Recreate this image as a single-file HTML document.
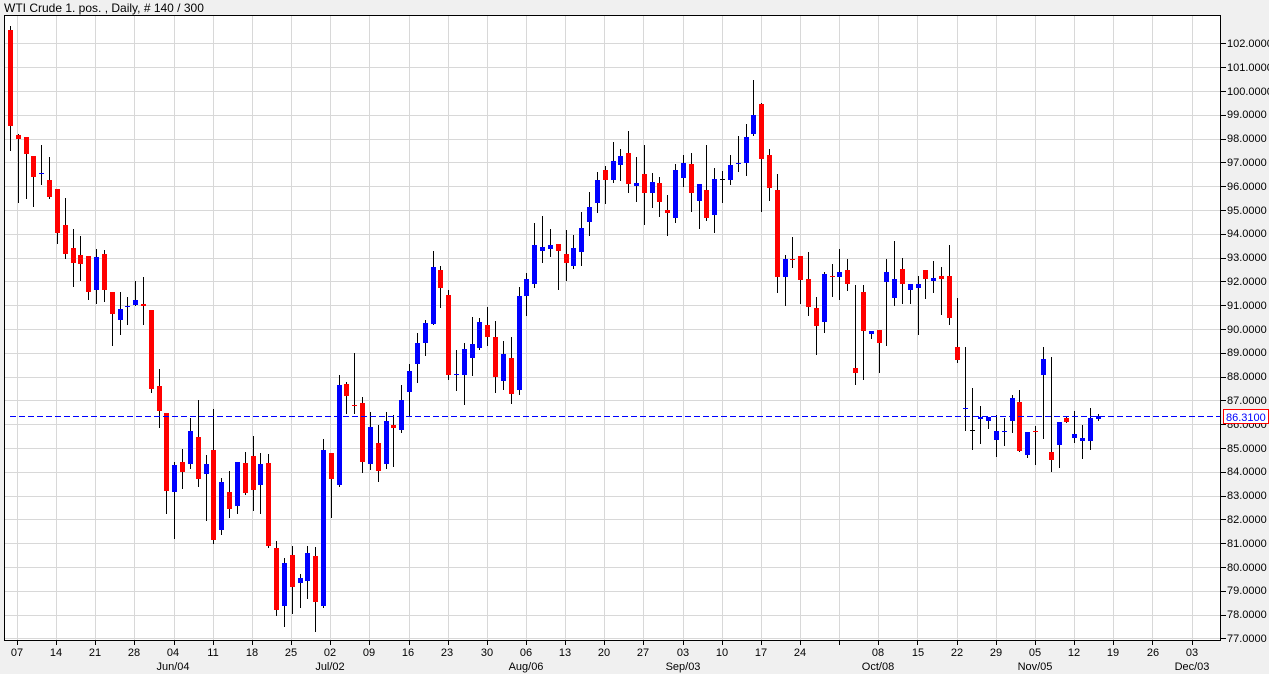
<!DOCTYPE html>
<html><head><meta charset="utf-8">
<style>
html,body{margin:0;padding:0;background:#f0f0f0;}
body{width:1269px;height:674px;overflow:hidden;position:relative;font-family:"Liberation Sans",sans-serif;}
svg{position:absolute;left:0;top:0;}
text{font-family:"Liberation Sans",sans-serif;font-size:11px;fill:#000;}
</style></head><body>
<svg id="s" width="1269" height="674" viewBox="0 0 1269 674" xmlns="http://www.w3.org/2000/svg">
<rect x="0" y="0" width="1269" height="674" fill="#f0f0f0"/>
<rect x="4" y="15" width="1216" height="625" fill="#ffffff"/>
<g id="grid"></g>
<g id="candles"></g>
<line x1="10" y1="416.5" x2="1220" y2="416.5" stroke="#0000ff" stroke-width="1" stroke-dasharray="6,3"/>
<line x1="4.5" y1="15" x2="4.5" y2="640" stroke="#000"/>
<line x1="4" y1="15.5" x2="1220" y2="15.5" stroke="#000"/>
<line x1="1220.5" y1="15" x2="1220.5" y2="641" stroke="#000"/>
<line x1="4" y1="640.5" x2="1221" y2="640.5" stroke="#000"/>
<g id="ticks"></g>
<text x="4" y="12" style="font-size:12px">WTI Crude 1. pos. , Daily, # 140 / 300</text>
<g text-anchor="start">
<text x="1227" y="47">102.0000</text>
<text x="1227" y="71">101.0000</text>
<text x="1227" y="95">100.0000</text>
<text x="1227" y="118">99.0000</text>
<text x="1227" y="142">98.0000</text>
<text x="1227" y="166">97.0000</text>
<text x="1227" y="190">96.0000</text>
<text x="1227" y="214">95.0000</text>
<text x="1227" y="237">94.0000</text>
<text x="1227" y="261">93.0000</text>
<text x="1227" y="285">92.0000</text>
<text x="1227" y="309">91.0000</text>
<text x="1227" y="333">90.0000</text>
<text x="1227" y="356">89.0000</text>
<text x="1227" y="380">88.0000</text>
<text x="1227" y="404">87.0000</text>
<text x="1227" y="428">86.0000</text>
<text x="1227" y="452">85.0000</text>
<text x="1227" y="475">84.0000</text>
<text x="1227" y="499">83.0000</text>
<text x="1227" y="523">82.0000</text>
<text x="1227" y="547">81.0000</text>
<text x="1227" y="571">80.0000</text>
<text x="1227" y="594">79.0000</text>
<text x="1227" y="618">78.0000</text>
<text x="1227" y="642">77.0000</text>
</g>
<rect x="1223.5" y="409.5" width="45" height="14" fill="#fff" stroke="#ff0000"/>
<text x="1226" y="421" style="fill:#0000ff">86.3100</text>
<g text-anchor="middle">
<text x="17" y="656">07</text><text x="56" y="656">14</text><text x="95" y="656">21</text><text x="134" y="656">28</text>
<text x="173" y="656">04</text><text x="213" y="656">11</text><text x="252" y="656">18</text><text x="291" y="656">25</text>
<text x="330" y="656">02</text><text x="369" y="656">09</text><text x="408" y="656">16</text><text x="447" y="656">23</text>
<text x="487" y="656">30</text><text x="526" y="656">06</text><text x="565" y="656">13</text><text x="604" y="656">20</text>
<text x="643" y="656">27</text><text x="683" y="656">03</text><text x="722" y="656">10</text><text x="761" y="656">17</text>
<text x="800" y="656">24</text><text x="878" y="656">08</text><text x="918" y="656">15</text>
<text x="957" y="656">22</text><text x="996" y="656">29</text><text x="1035" y="656">05</text><text x="1074" y="656">12</text>
<text x="1113" y="656">19</text><text x="1153" y="656">26</text><text x="1192" y="656">03</text>
<text x="173" y="670">Jun/04</text><text x="330" y="670">Jul/02</text><text x="526" y="670">Aug/06</text>
<text x="683" y="670">Sep/03</text><text x="878" y="670">Oct/08</text><text x="1035" y="670">Nov/05</text>
<text x="1192" y="670">Dec/03</text>
</g>
</svg>
<script>
(function(){
var NS="http://www.w3.org/2000/svg";
function el(n,a,p){var e=document.createElementNS(NS,n);for(var k in a)e.setAttribute(k,a[k]);p.appendChild(e);return e;}
var g=document.getElementById('grid'),t=document.getElementById('ticks'),c=document.getElementById('candles');
for(var k=0;k<31;k++){var x=Math.round(17+39.15*k)+0.5;
 el('line',{x1:x,y1:16,x2:x,y2:640,stroke:'#d8d8d8'},g);
 el('line',{x1:x,y1:641,x2:x,y2:645,stroke:'#000'},t);}
for(var j=0;j<26;j++){var y=Math.round(43.3+23.8*j)+0.5;
 if(y<640)el('line',{x1:5,y1:y,x2:1220,y2:y,stroke:'#d8d8d8'},g);
 el('line',{x1:1221,y1:y,x2:1226,y2:y,stroke:'#000'},t);}
var d=[
[10,26,150,30,126,'r'],[18,134,202,135,139,'r'],[26,137,198,137,154,'r'],[33,156,206,156,177,'r'],[41,145,184,173,173,'b'],
[49,157,198,180,197,'r'],[57,189,243,189,233,'r'],[65,198,258,225,254,'r'],[73,229,286,248,263,'r'],[80,236,280,255,264,'r'],
[88,256,299,256,292,'r'],[96,249,303,257,290,'b'],[104,250,301,254,290,'r'],[112,292,345,292,314,'r'],[120,292,334,309,320,'b'],
[127,297,324,306,306,'b'],[135,281,305,300,305,'b'],[143,277,324,304,306,'r'],[151,310,392,310,389,'r'],[159,369,427,386,411,'r'],
[166,413,513,413,491,'r'],[174,462,538,465,492,'b'],[182,449,488,462,472,'r'],[190,418,468,431,464,'b'],[198,400,486,437,479,'r'],
[206,455,520,464,474,'b'],[213,409,543,450,540,'r'],[221,478,534,482,530,'b'],[229,471,517,492,509,'r'],[237,462,513,462,506,'b'],
[245,452,494,463,493,'r'],[253,436,510,456,490,'r'],[260,453,513,464,485,'b'],[268,454,547,463,546,'r'],[276,541,615,548,610,'r'],
[284,558,626,563,606,'b'],[292,546,613,555,587,'r'],[300,574,607,578,583,'b'],[307,546,598,553,581,'b'],[315,547,631,556,602,'r'],
[323,439,607,450,606,'b'],[331,453,517,453,479,'r'],[339,375,486,385,485,'b'],[346,382,413,384,396,'r'],[354,353,413,405,406,'r'],
[362,397,472,403,462,'r'],[370,412,469,427,464,'b'],[378,425,481,443,471,'r'],[386,412,468,421,464,'b'],[393,415,466,425,428,'r'],
[401,385,432,400,430,'b'],[409,364,415,371,392,'b'],[417,333,382,343,364,'b'],[425,320,355,323,343,'b'],[433,251,324,267,324,'b'],
[440,266,307,270,288,'r'],[448,290,379,295,375,'r'],[456,350,390,374,375,'b'],[464,343,404,349,375,'b'],[472,317,375,344,358,'b'],
[479,318,349,322,348,'b'],[487,307,345,325,337,'r'],[495,321,392,337,377,'r'],[503,341,389,354,381,'b'],[511,337,403,358,394,'r'],
[519,287,394,296,390,'b'],[526,273,315,279,296,'b'],[534,223,287,245,284,'b'],[542,216,262,247,251,'b'],[550,229,256,245,249,'b'],
[558,244,289,244,251,'r'],[566,230,280,254,263,'r'],[573,235,268,248,266,'b'],[581,212,265,228,252,'b'],[589,192,235,207,222,'b'],
[597,172,212,180,203,'b'],[605,166,203,170,180,'r'],[613,142,182,161,180,'b'],[620,149,180,156,165,'b'],[628,131,192,153,184,'r'],
[636,157,201,183,186,'b'],[644,145,224,174,193,'r'],[652,173,207,182,193,'b'],[659,177,216,183,202,'r'],[667,195,235,210,213,'r'],
[675,164,222,170,218,'b'],[683,155,186,163,178,'b'],[691,153,211,164,193,'r'],[699,184,228,184,201,'b'],[706,145,220,190,218,'r'],
[714,168,232,179,215,'b'],[722,171,202,179,179,'k'],[730,155,184,165,180,'b'],[738,136,171,163,163,'b'],[746,124,175,137,163,'b'],
[753,80,135,115,134,'b'],[761,103,211,104,159,'r'],[769,149,200,155,188,'r'],[777,174,292,190,277,'r'],[785,255,305,259,277,'b'],
[792,237,267,259,260,'r'],[800,256,303,256,280,'r'],[808,252,315,279,307,'r'],[816,297,354,308,326,'r'],[824,272,332,274,322,'b'],
[832,264,296,276,276,'r'],[839,249,299,272,277,'b'],[847,259,290,270,284,'r'],[855,285,384,368,373,'r'],[863,285,379,292,331,'r'],
[871,331,338,331,334,'b'],[879,330,372,330,343,'r'],[886,259,345,272,282,'b'],[894,241,305,279,298,'b'],[902,258,303,269,284,'r'],
[910,284,303,284,290,'b'],[918,276,334,284,288,'b'],[925,270,298,270,279,'r'],[933,261,292,278,281,'b'],[941,267,314,276,279,'r'],
[949,245,324,276,318,'r'],[957,298,362,347,360,'r'],[965,347,430,408,408,'b'],[972,388,449,430,430,'k'],[980,406,443,417,419,'b'],
[988,417,428,417,421,'b'],[996,415,456,431,440,'b'],[1004,418,445,431,431,'b'],[1012,395,432,398,421,'b'],[1019,390,451,402,451,'r'],
[1027,432,457,432,455,'b'],[1035,426,464,431,431,'r'],[1043,347,438,359,375,'b'],[1051,357,471,452,460,'r'],[1059,422,467,422,445,'b'],
[1066,417,422,418,422,'r'],[1074,411,442,434,438,'b'],[1082,425,458,438,441,'b'],[1090,408,449,418,441,'b'],[1098,414,420,416,419,'b']
];
var col={r:'#ff0000',b:'#0000ff',k:'#000000'};
d.forEach(function(a){
 var x=a[0];
 el('rect',{x:x,y:a[1],width:1,height:a[2]-a[1]+1,fill:'#000'},c);
 var h=a[4]-a[3];
 if(h<2){el('rect',{x:x-2,y:a[3],width:5,height:1,fill:col[a[5]]},c);}
 else{el('rect',{x:x-2,y:a[3],width:5,height:h,fill:col[a[5]]},c);}
});
})();
</script>
</body></html>
